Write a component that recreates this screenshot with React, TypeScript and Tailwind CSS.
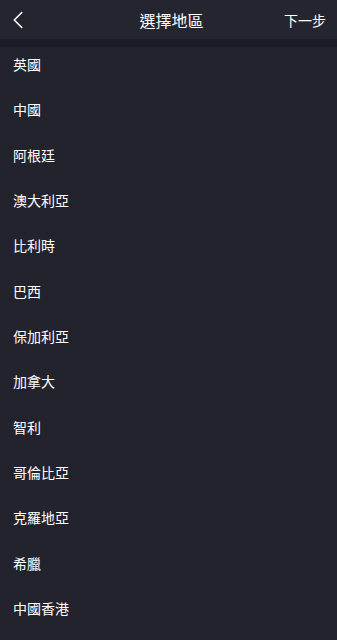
import { ChevronLeft } from "lucide-react"

const regions = [
  "英國",
  "中國",
  "阿根廷",
  "澳大利亞",
  "比利時",
  "巴西",
  "保加利亞",
  "加拿大",
  "智利",
  "哥倫比亞",
  "克羅地亞",
  "希臘",
  "中國香港",
]

export default function App() {
  return (
    <div
      className="w-full min-h-screen bg-[#23232e] text-white overflow-hidden"
      style={{ fontFamily: '"Noto Sans CJK TC", "Noto Sans", sans-serif' }}
    >
      <header className="relative h-[39px] bg-[#25252f] flex items-center justify-center">
        <button className="absolute left-[3px] top-[5px] text-white">
          <ChevronLeft className="w-[30px] h-[30px]" strokeWidth={1.3} />
        </button>
        <h1 className="text-[16px] leading-[20px] ml-[6px]">選擇地區</h1>
        <span className="absolute right-[11px] top-[10px] text-[14px] leading-[20px]">下一步</span>
      </header>
      <div className="h-[8px] bg-[#1c1c25]" />
      <ul>
        {regions.map((r) => (
          <li key={r} className="h-[45.33px] px-[13px] pt-[7px] text-[14px] leading-[20px]">
            {r}
          </li>
        ))}
      </ul>
    </div>
  )
}
